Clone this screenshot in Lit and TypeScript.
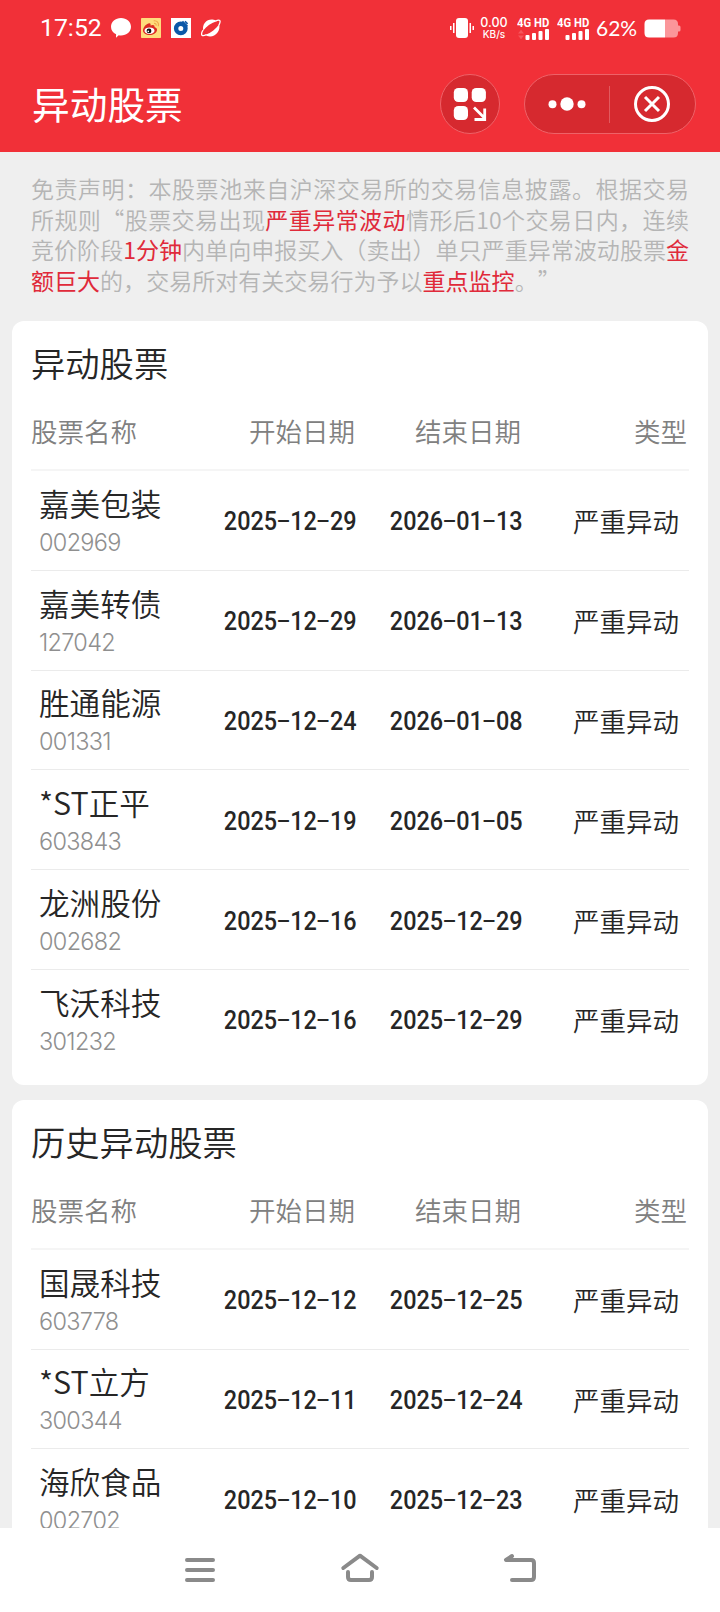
import { LitElement, html, css, svg } from "lit";
import { customElement, property } from "lit/decorators.js";

type Stock = [name: string, code: string, start: string, end: string];

const CURRENT: Stock[] = [
  ["嘉美包装", "002969", "2025-12-29", "2026-01-13"],
  ["嘉美转债", "127042", "2025-12-29", "2026-01-13"],
  ["胜通能源", "001331", "2025-12-24", "2026-01-08"],
  ["*ST正平", "603843", "2025-12-19", "2026-01-05"],
  ["龙洲股份", "002682", "2025-12-16", "2025-12-29"],
  ["飞沃科技", "301232", "2025-12-16", "2025-12-29"],
];
const HISTORY: Stock[] = [
  ["国晟科技", "603778", "2025-12-12", "2025-12-25"],
  ["*ST立方", "300344", "2025-12-11", "2025-12-24"],
  ["海欣食品", "002702", "2025-12-10", "2025-12-23"],
];

@customElement("status-bar")
export class StatusBar extends LitElement {
  static styles = css`
    :host { display: flex; height: 56px; padding: 0 39px 0 40px; align-items: center; color: #fff; box-sizing: border-box; font-family: Inter, sans-serif; }
    .time { font: 400 24.800px/56px Roboto, sans-serif; width: 63px; white-space: nowrap; }
    .icons { display: flex; gap: 10px; margin-left: 8px; }
    .spacer { flex: 1; }
    svg { display: block; }
    .speed { display: flex; flex-direction: column; align-items: center; width: 28px; margin: 1px 9px 0 6px; font-size: 12.5px; line-height: 11px; font-weight: 500; }
    .speed small { font-size: 10px; line-height: 12px; }
    .net { width: 33px; margin-right: 7px; }
    .net b { display: block; width: 38px; font: 700 12.800px/12px Roboto, sans-serif; white-space: nowrap; transform: scaleX(0.88); transform-origin: 0 50%; }
    .pct { font: 400 21px/56px Lato, sans-serif; width: 43px; margin: 0 5px 0 -1px; white-space: nowrap; }
  `;
  private signal(arrows: boolean) {
    return html`<div class="net"><b>4G HD</b>
      <svg width="33" height="11" viewBox="0 0 33 11" fill="#fff">
        ${arrows ? svg`<path d="M1 4.500 4 .8 7 4.500zM1 6.500h6L4 10.200z" fill="#f5555b"/>` : ""}
        <rect x="8.500" y="6" width="4" height="5" rx="1"/><rect x="15" y="4" width="4" height="7" rx="1"/>
        <rect x="21.500" y="2" width="4" height="9" rx="1"/><rect x="28" y="0" width="4" height="11" rx="1"/>
      </svg></div>`;
  }
  render() {
    return html`
      <span class="time">17:52</span>
      <div class="icons">
        <svg width="20" height="20" viewBox="0 0 20 20"><path fill="#fff" d="M10 0c5.600 0 10 3.900 10 8.800s-4.400 8.700-10 8.700c-.8 0-1.600-.1-2.300-.2L5 19.800l.1-3.500C2 14.900 0 12.200 0 8.800 0 3.900 4.400 0 10 0z"/></svg>
        <svg width="20" height="20" viewBox="0 0 20 20"><rect width="20" height="20" rx=".8" fill="#ffdc7c"/>
          <path d="M2 12.500C2 9 6 5 8.500 5.200c1.300.2 1.200 1.400 1 2.200 2.300-1 4.500-.6 4 1.600 2.300.7 2.700 2 2.500 3.200C15.500 15 12 17 8.700 17 5 17 2 15.200 2 12.500z" fill="#dc2b23"/>
          <ellipse cx="8.500" cy="12.700" rx="5" ry="3.300" fill="#fff"/><circle cx="8" cy="12.900" r="2.400" fill="#111"/><circle cx="7.300" cy="13.400" r=".8" fill="#fff"/>
          <path d="M12.700 2.800c3.300-.5 5.600 2.200 4.600 5.400M13 5.400c1.500-.2 2.400.8 2.100 2.200" fill="none" stroke="#f1a94a" stroke-width="1.200"/></svg>
        <svg width="20" height="20" viewBox="0 0 20 20"><rect width="20" height="20" fill="#fff"/>
          <circle cx="9.800" cy="10.400" r="4.700" fill="none" stroke="#0b58a8" stroke-width="4.400"/>
          <path d="M10.500 2.500 18 9.500V1H10.500z" fill="#fff"/>
          <path d="M11.500 3.300l5 4.900M14 3.300l2.600 2.600" stroke="#0b58a8" stroke-width="1.500"/></svg>
        <svg width="20" height="20" viewBox="0 0 20 20"><path d="M2.300 12.500C.8 6.300 5.600 1.300 11.300 1.600c2 .1 3.400.6 4.400 1.600C10.500 4.600 5.500 8 2.300 12.500z" fill="#fff"/><path d="M4.500 16.800c5.800-2.200 10.500-5.900 13.700-10.600C19.700 12.700 14.700 18.600 9 18.500c-2 0-3.600-.7-4.500-1.700z" fill="#fff"/><path d="M14.500 3c2.500-1.300 4.600-1.200 4.600.2 0 1.400-.4 2.500-1.200 4M2.100 12C.6 14.300.3 16.400 1 17.300c.7.700 2.400.4 4.500-.6" fill="none" stroke="#fff" stroke-width="1.300"/></svg>
      </div>
      <span class="spacer"></span>
      <svg width="24" height="20" viewBox="0 0 24 20" fill="#fff"><rect x="6" width="12" height="20" rx="3"/><rect x="3" y="5" width="1.500" height="10"/><rect y="8" width="1.500" height="4"/><rect x="19.500" y="5" width="1.500" height="10"/><rect x="22.500" y="8" width="1.500" height="4"/></svg>
      <div class="speed"><span>0.00</span><small>KB/s</small></div>
      ${this.signal(true)}${this.signal(false)}
      <span class="pct">62%</span>
      <svg width="37" height="19" viewBox="0 0 37 19"><path d="M21 .5h8.500Q34 .5 34 5v1.500h1q1.500 0 1.500 1.500v3q0 1.500-1.500 1.500h-1V14q0 4.500-4.500 4.500H21z" fill="#fb969a"/><path d="M21 .5v18H5Q.5 18.500.5 14V5Q.5.5 5 .5z" fill="#fff"/></svg>
    `;
  }
}

@customElement("stock-card")
export class StockCard extends LitElement {
  @property() heading = "";
  @property({ attribute: false }) rows: Stock[] = [];
  static styles = css`
    :host { display: block; flex: none; background: #fff; border-radius: 12px; padding: 0 19px 15px; }
    .heading { font-size: 34.3px; line-height: 48px; padding-top: 17px; height: 51px; color: #262626; font-weight: 350; }
    .grid { display: grid; grid-template-columns: 160px 166px 166px 1fr; align-items: center; }
    .head { height: 82px; box-sizing: border-box; padding-top: 3px; border-bottom: 2px solid #f5f5f5; font-size: 26.5px; color: #808080; font-weight: 350; }
    .head span, .cell { text-align: right; white-space: nowrap; }
    .head span { padding-right: 2px; }
    .head span:first-child { text-align: left; }
    .row { height: 99.800px; box-sizing: border-box; border-bottom: 1px solid #ebebeb; color: #262626; font-weight: 350; }
    .row:last-child { border-color: transparent; }
    .stock { padding: 3px 0 0 8px; white-space: nowrap; }
    .name { font-size: 30.600px; line-height: 40px; height: 40px; }
    .code { font: 300 23.500px/40px Inter, sans-serif; height: 38px; color: #8f8f8f; letter-spacing: -0.7px; }
    .date { display: flex; justify-content: flex-end; font: 500 25.500px/34px Roboto, sans-serif; padding-top: 2px; }
    .digits { transform: scaleX(0.918); transform-origin: 100% 50%; display: flex; }
    .dash { display: flex; justify-content: center; width: 14.300px; font-family: Inter, sans-serif; font-weight: 400; transform: translateY(-1px) scaleX(1.45); }
    .type { font-size: 26.500px; line-height: 34px; padding: 2px 10px 0 0; }
  `;
  private date(value: string) {
    return html`<div class="cell date"><span class="digits">${value
      .split("-")
      .map((part, i) => (i ? html`<span class="dash">-</span><span>${part}</span>` : html`<span>${part}</span>`))}</span></div>`;
  }
  render() {
    return html`
      <div class="heading">${this.heading}</div>
      <div class="grid head"><span>股票名称</span><span>开始日期</span><span>结束日期</span><span>类型</span></div>
      <div>${this.rows.map(([name, code, start, end]) => html`
        <div class="grid row">
          <div class="stock"><div class="name">${name}</div><div class="code">${code}</div></div>
          ${this.date(start)}${this.date(end)}
          <div class="cell type">严重异动</div>
        </div>`)}</div>
    `;
  }
}

@customElement("app-root")
export class AppRoot extends LitElement {
  static styles = css`
    :host { display: flex; flex-direction: column; width: 720px; height: 1612px; overflow: hidden; background: #efefef; font-family: "Noto Sans CJK SC", sans-serif; }
    .top { flex: none; height: 152px; background: #f13038; }
    .title-bar { display: flex; align-items: center; height: 96px; padding: 0 24px 0 32px; }
    h1 { margin: 0 0 2px; flex: 1; font-size: 37.700px; line-height: 60px; font-weight: 400; color: #fff; }
    .round, .capsule { box-sizing: border-box; height: 60px; border: 1px solid #ee6268; background: #d6292f; border-radius: 30px; display: flex; align-items: center; }
    .round { width: 60px; justify-content: center; margin-right: 24px; }
    .capsule { width: 172px; padding-right: 1px; }
    .half { flex: 1; display: flex; justify-content: center; }
    .split { width: 1px; height: 37px; background: #e15a5f; }
    .content { flex: 1; min-height: 0; overflow: hidden; display: flex; flex-direction: column; gap: 15px; padding: 0 12px; }
    .notice { flex: none; padding: 21px 0 0 19px; height: 133px; font-size: 23.040px; line-height: 30.600px; font-weight: 350; color: #b5b5b5; white-space: nowrap; text-spacing-trim: space-all; }
    .line { display: block; width: 658px; text-align: justify; text-align-last: justify; }
    .line.last { text-align: left; text-align-last: left; }
    .notice b { font-weight: 400; color: #e02a3a; }
    .nav { flex: none; height: 84px; background: #fff; display: flex; justify-content: center; gap: 120px; align-items: center; }
    svg { display: block; }
  `;
  render() {
    return html`
      <div class="top">
        <status-bar></status-bar>
        <div class="title-bar">
          <h1>异动股票</h1>
          <div class="round"><svg width="34" height="34" viewBox="0 0 34 34" fill="#fff"><rect x=".8" y="1" width="14.200" height="14" rx="4.500"/><rect x="18.700" y="1" width="14.200" height="14" rx="4.500"/><rect x=".8" y="19" width="14.200" height="14" rx="4.500"/><path d="M21 20.500 31.500 31M31.700 21.500v11H21.500" fill="none" stroke="#fff" stroke-width="2.800"/></svg></div>
          <div class="capsule">
            <div class="half"><svg width="38" height="14" viewBox="0 0 38 14" fill="#fff"><circle cx="4.500" cy="7.300" r="4"/><circle cx="19" cy="7" r="6.700"/><circle cx="33.500" cy="7.300" r="4"/></svg></div>
            <div class="split"></div>
            <div class="half"><svg width="36" height="36" viewBox="0 0 36 36" fill="none" stroke="#fff" stroke-width="3"><circle cx="18" cy="18" r="16.500"/><path d="m11 11 14 14M25 11 11 25"/></svg></div>
          </div>
        </div>
      </div>
      <div class="content">
        <div class="notice">
          <span class="line">免责声明：本股票池来自沪深交易所的交易信息披露。根据交易</span>
          <span class="line">所规则“股票交易出现<b>严重异常波动</b>情形后10个交易日内，连续</span>
          <span class="line">竞价阶段<b>1分钟</b>内单向申报买入（卖出）单只严重异常波动股票<b>金</b></span>
          <span class="line last"><b>额巨大</b>的，交易所对有关交易行为予以<b>重点监控</b>。”</span>
        </div>
        <stock-card heading="异动股票" .rows=${CURRENT}></stock-card>
        <stock-card heading="历史异动股票" .rows=${HISTORY}></stock-card>
      </div>
      <div class="nav">
        <svg width="40" height="36" viewBox="0 0 40 36" stroke="#8a8a8a" stroke-width="4" stroke-linecap="round"><path d="M7 8h26M7 18h26M7 28h26"/></svg>
        <svg width="40" height="36" viewBox="0 0 40 36" fill="none" stroke="#8a8a8a" stroke-width="4" stroke-linecap="round" stroke-linejoin="round"><path d="M3.300 16 20 3.700 36.700 16M8 20v5q0 3 3 3h18q3 0 3-3v-5"/></svg>
        <svg width="40" height="36" viewBox="0 0 40 36" fill="none" stroke="#8a8a8a" stroke-width="4" stroke-linecap="round" stroke-linejoin="round"><path d="M12 4 6 8h25q3 0 3 3v14q0 3-3 3H12"/></svg>
      </div>
    `;
  }
}
